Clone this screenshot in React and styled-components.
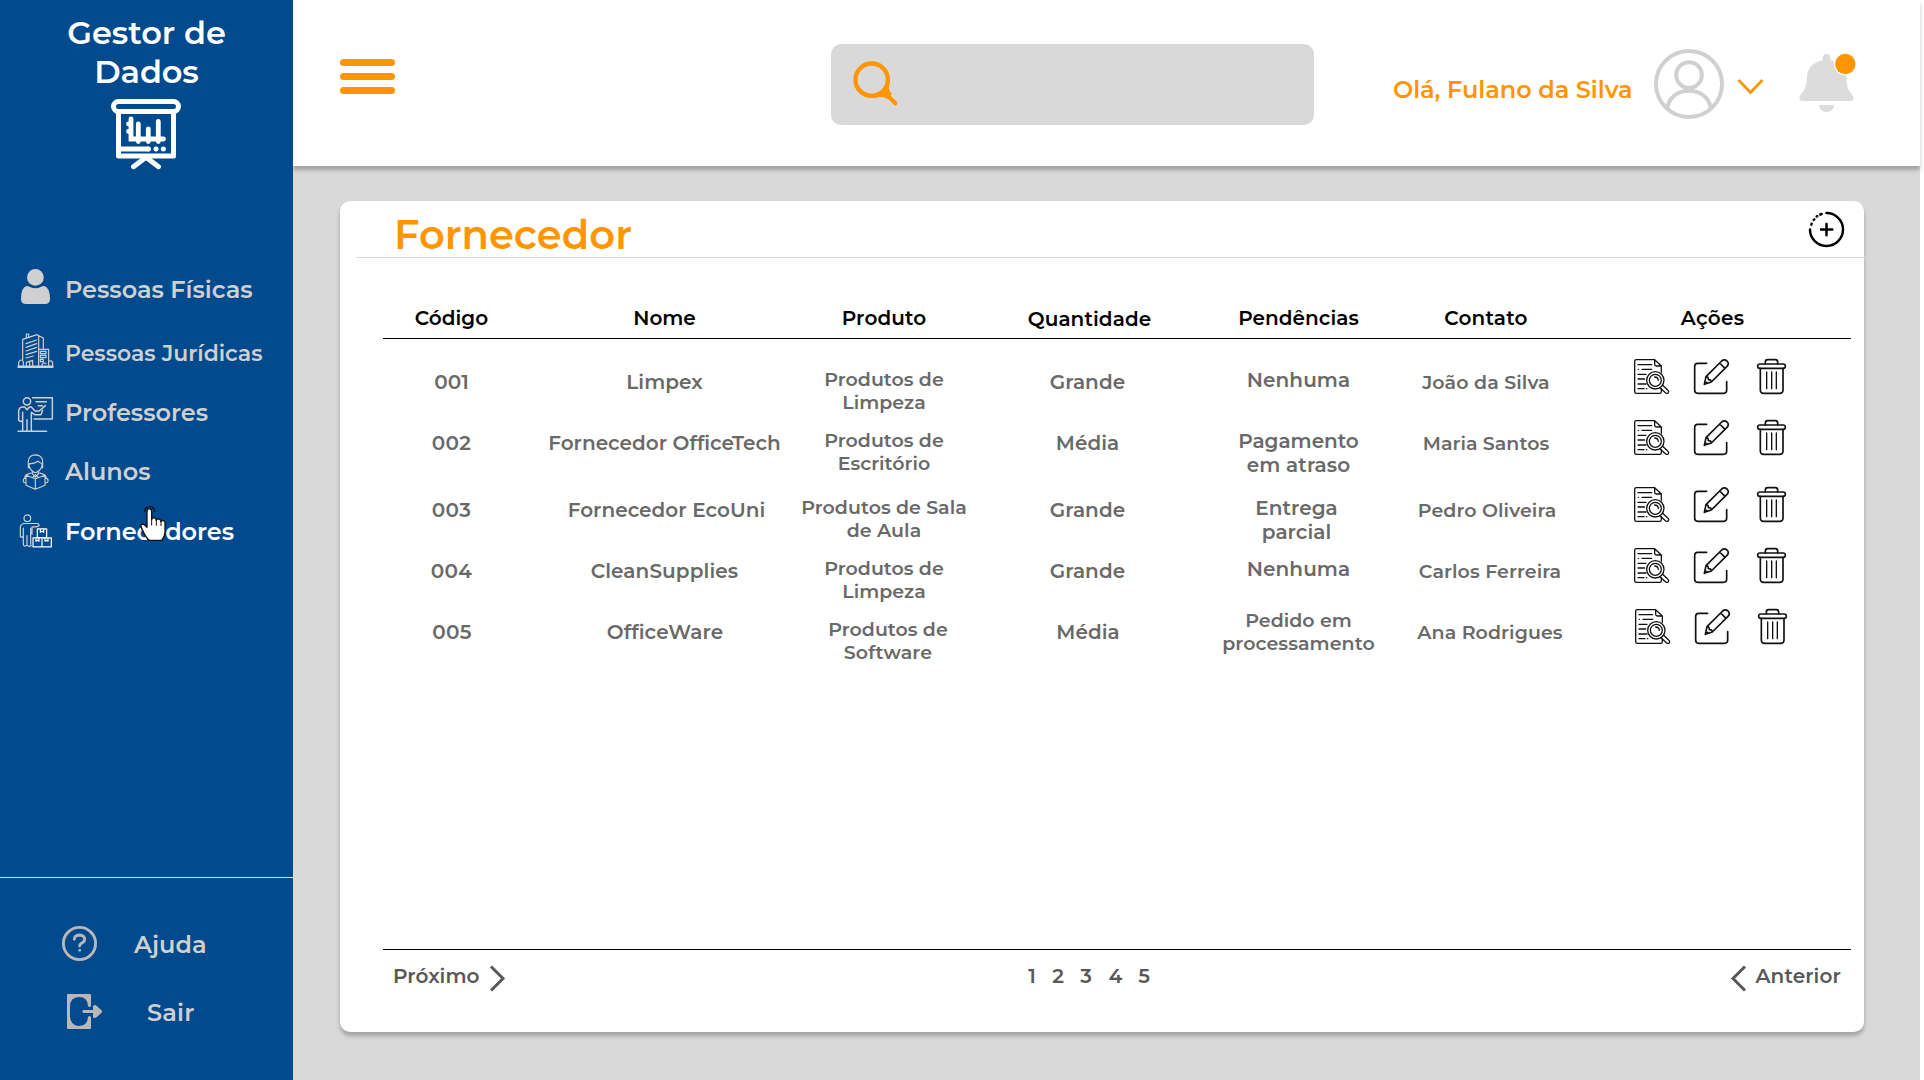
import React, { useLayoutEffect, useRef, useState } from "react";
import styled, { createGlobalStyle, css } from "styled-components";

const color = {
  blue: "#004a8d",
  orange: "#ff9500",
  grey: "#d9d9d9",
  nav: "#d0d0d0",
  text: "#696969",
  foot: "#585858",
};

const GlobalStyle = createGlobalStyle`
  * { box-sizing: border-box; }
  body {
    margin: 0;
    background: #fff;
    overflow: hidden;
    font-family: Montserrat, Inter, "Liberation Sans", sans-serif;
    font-weight: 600;
  }
  svg { display: block; flex: none; overflow: visible; }
`;

/* ---------- text tracked out to a given measure ---------- */

const Label = styled.span`
  display: block;
  width: max-content;
  white-space: nowrap;
  flex: none;
`;

function Fit({ w, children }) {
  const ref = useRef(null);
  const [spacing, setSpacing] = useState(0);
  useLayoutEffect(() => {
    const natural = ref.current.getBoundingClientRect().width;
    setSpacing((w + 1.5 - natural) / String(children).length);
  }, [w, children]);
  return (
    <Label ref={ref} style={{ letterSpacing: `${spacing}px` }}>
      {children}
    </Label>
  );
}

/* ---------- shell ---------- */

const Page = styled.div`
  display: flex;
  width: 1920px;
  height: 1080px;
  background: ${color.grey};
`;

const Sidebar = styled.aside`
  display: flex;
  flex-direction: column;
  flex: none;
  width: 293px;
  height: 1080px;
  background: ${color.blue};
`;

const Brand = styled.div`
  display: flex;
  flex-direction: column;
  align-items: center;
  height: 260px;
  padding-top: 13px;
  color: #fff;
  font-size: 32px;
  line-height: 39px;
  svg { margin: 8px 2px 0 0; }
`;

const Nav = styled.nav`
  display: flex;
  flex-direction: column;
  flex: 1;
`;

const NavItem = styled.a`
  position: relative;
  display: flex;
  align-items: center;
  gap: 12px;
  height: ${(p) => p.$h}px;
  padding: 0 0 ${(p) => (p.$size ? 0 : 2)}px 18px;
  font-size: ${(p) => p.$size || 24}px;
  color: ${(p) => (p.$active ? "#fff" : color.nav)};
  > svg:first-child { transform: translateY(${(p) => p.$shift}px); }
`;

const Pointer = styled.svg`
  position: absolute;
  left: 139px;
  top: 2px;
`;

const SideFoot = styled.div`
  height: 203px;
  padding-top: 33px;
  border-top: 1px solid ${color.grey};
  color: ${color.nav};
  font-size: 24px;
`;

const FootItem = styled.a`
  display: flex;
  align-items: center;
  height: 68px;
  padding: 0 0 2px ${(p) => p.$left}px;
  gap: ${(p) => p.$gap}px;
  svg { margin-top: -1px; }
`;

const Main = styled.main`
  display: flex;
  flex-direction: column;
  width: 1627px;
`;

const Header = styled.header`
  display: flex;
  align-items: flex-start;
  flex: none;
  height: 166px;
  padding-left: 47px;
  background: #fff;
  box-shadow: 0 4px 4px rgba(0, 0, 0, 0.25);
  clip-path: inset(0 -4px -10px 0);
`;

const Burger = styled.button`
  display: flex;
  flex-direction: column;
  gap: 7px;
  width: 55px;
  margin: 59px 436px 0 0;
  padding: 0;
  border: 0;
  background: none;
`;

const Bar = styled.span`
  height: 7px;
  border-radius: 3.5px;
  background: ${color.orange};
`;

const Search = styled.div`
  width: 483px;
  height: 81px;
  margin-top: 44px;
  padding: 17px 22px;
  border-radius: 10px;
  background: ${color.grey};
`;

const User = styled.div`
  display: flex;
  align-items: flex-start;
  margin-left: 79px;
  padding-top: 49px;
  color: ${color.orange};
  font-size: 24px;
  line-height: 81px;
`;

const Avatar = styled.svg`margin-left: 21.5px;`;
const Caret = styled.svg`margin: 29px 0 0 13px;`;
const Bell = styled.svg`margin: 5px 0 0 35px;`;

/* ---------- card ---------- */

const Card = styled.section`
  display: flex;
  flex-direction: column;
  width: 1524px;
  height: 831px;
  margin: 35px 0 0 47px;
  border-radius: 10px;
  background: #fff;
  box-shadow: 0 4px 4px rgba(0, 0, 0, 0.25);
`;

const CardHead = styled.div`
  display: flex;
  align-items: flex-start;
  justify-content: space-between;
  width: 1510px;
  height: 57px;
  margin-left: 16px;
  padding: 11px 22px 0 38px;
  border-bottom: 1px solid ${color.grey};
  color: ${color.orange};
  font-size: 40px;
  line-height: 45px;
`;

const Title = styled.h1`
  margin: 0;
  font: inherit;
`;

const Table = styled.div`
  width: 1468px;
  height: 651px;
  margin: 40px 0 0 43px;
`;

const grid = css`
  display: grid;
  grid-template-columns: 136px 291px 148px 260px 161px 212px 237px;
`;

const HeadRow = styled.div`
  ${grid}
  height: 41px;
  margin-bottom: 20px;
  border-bottom: 1px solid #000;
  color: #000;
  font-size: 20px;
  line-height: 40px;
`;

const Row = styled.div`
  ${grid}
  height: ${(p) => p.$h}px;
  color: ${color.text};
`;

const Cell = styled.div`
  display: flex;
  flex-direction: column;
  align-items: center;
  padding-top: ${(p) => p.$top || 0}px;
  transform: translateX(${(p) => p.$dx || 0}px);
  font-size: ${(p) => (p.$small ? 19 : 20)}px;
  line-height: ${(p) => (p.$small ? 23 : 24)}px;
`;

const HeadCell = styled.div`
  display: flex;
  justify-content: center;
  padding-top: ${(p) => p.$top || 0}px;
  transform: translateX(${(p) => p.$dx || 0}px);
`;

const Actions = styled.div`
  display: flex;
  align-items: flex-start;
  padding-left: ${(p) => 43 + (p.$dx || 0)}px;
  gap: 25px;
  color: #111;
`;

const Pager = styled.div`
  display: flex;
  align-items: flex-start;
  justify-content: space-between;
  width: 1468px;
  margin-left: 43px;
  padding: 14px 10px 0 10px;
  border-top: 1px solid #000;
  color: ${color.foot};
  font-size: 20px;
  line-height: 24px;
`;

const Step = styled.a`
  display: flex;
  gap: ${(p) => p.$gap}px;
  svg { margin-top: 1px; }
`;

const Pages = styled.div`
  display: flex;
  width: 140px;
  margin-right: 53px;
`;

const PageNo = styled.a`
  width: ${(p) => p.$w}px;
  text-align: center;
`;

/* ---------- icons ---------- */

const Glyph = ({ size = 35, sw = 4, children }) => (
  <svg width={size} height={size} viewBox="0 0 105 105" fill="none" stroke="currentColor"
    strokeWidth={sw} strokeLinecap="round" strokeLinejoin="round">
    {children}
  </svg>
);

const BoardLogo = () => (
  <svg width="70" height="70" viewBox="0 0 70 70" fill="none" stroke="#fff" strokeWidth="5" strokeLinecap="round">
    <rect x="2.5" y="2.5" width="65" height="10" rx="5" />
    <path d="M7.5 14V57H62.5V14" strokeLinejoin="round" />
    <path d="M34 59L22.5 67.7M36 59L47.5 67.7" />
    <path d="M10 50H38" strokeLinecap="butt" />
    <path d="M37 50h.5M45 50h.1M52.3 50h.1" />
    <path d="M20 20V40H52.5M17.5 25h1M17.5 32.5h1M27.3 25V42.5M37.3 30V42.5M47.3 22.5V42.5" strokeWidth="4.8" />
  </svg>
);

const PersonIcon = () => (
  <svg width="35" height="35" viewBox="0 0 35 35" fill="currentColor">
    <circle cx="17.4" cy="8.4" r="8.4" />
    <path d="M8.5 17Q10.5 17 12 18Q17.4 20.6 22.8 18Q24.3 17 26.3 17Q32 18.5 32 30Q32 35 27 35H8Q3 35 3 30Q3 18.5 8.5 17Z" />
  </svg>
);

const BuildingIcon = () => (
  <Glyph sw={3.6}>
    <path d="M0 99.5H105M0 103H105M14 80V19L57 5L76 15V46M62 10V99M25 14V3h7v9" />
    <path d="M24 32L56 21M24 43L56 32M24 54L56 43M24 65L56 55M24 75L46 69" />
    <path d="M62 49H92V99M67 55h17v7h-17zM67 67h17v7h-17zM67 79h9v7h-9z" />
    <path d="M25 99V88L44 82V99M35 86V99M2 99V88q6-13 14-2v13M92 86q9-7 12 4v9M72 99v-5q5-8 12-2" />
  </Glyph>
);

const TeacherIcon = () => (
  <Glyph sw={4.4}>
    <circle cx="27" cy="13" r="11" />
    <path d="M44 2H103V66H48M54 14H85M61 26H73" />
    <path d="M2 70V43Q2 31 14 30H20L27 38L34 30H40L51 42H64L82 26" />
    <path d="M40 46L50 53H69L74 40M14 46V102M27 68V102M40 47V102M2 70Q8 77 14 70M0 103H86" />
  </Glyph>
);

const StudentIcon = () => (
  <Glyph sw={3.4}>
    <path d="M31 40V20Q33 1 52 1Q73 2 74 20V40M34 28Q50 27 60 20Q66 26 72 27M34 28Q31 36 37 43Q46 54 52 54Q59 54 68 43Q74 36 72 27" />
    <path d="M43 51V57L52 68L62 57V51M52 60L45 68M52 60L60 68M39 56Q24 59 20 68M66 56Q80 59 85 68" />
    <path d="M52 104L24 92V62L52 73L81 62V92ZM52 73V104M24 70Q14 72 16 80Q18 87 24 84M81 70Q92 72 90 80Q87 87 81 84" />
  </Glyph>
);

const SupplierIcon = () => (
  <Glyph sw={3.6}>
    <g stroke={color.nav}>
      <circle cx="28" cy="14" r="10" />
      <path d="M7 69V42Q8 30 19 30H57Q64 31 63 37Q61 40 42 40V62M7 69Q12 74 16 67V44M16 67V94Q20 101 27 95V66M27 95Q33 101 40 96M38 44V92" />
    </g>
    <path d="M58 46H86V72H58ZM45 73H72V100H45ZM72 73H100V100H72ZM67 47V56L72 53L77 56V47M54 74V83L59 80L63 83V74M81 74V83L86 80L90 83V74" />
  </Glyph>
);

const HandPointer = () => (
  <Pointer width="28" height="36" viewBox="0 0 84 108" stroke="#111" strokeWidth="4" strokeLinecap="round" strokeLinejoin="round">
    <path d="M17 17Q17 2 32 2Q46 2 47 17" fill="none" stroke="#0b1626" />
    <path d="M24 59V15Q25 8 31 8Q38 9 38 17V40Q39 35 45 35Q51 36 52 43Q54 38 60 39Q66 41 66 47Q68 42 74 44Q79 46 78 52V78Q78 92 68 103H31Q22 96 13 77Q5 64 6 57Q12 50 24 64Z" fill="#fff" />
    <path d="M38 40V57M52 43V58M66 47V59" fill="none" strokeWidth="3" />
  </Pointer>
);

const HelpIcon = () => (
  <Glyph sw={8.6}>
    <g stroke="#b8b8b8">
      <circle cx="52.5" cy="52.5" r="48.3" />
      <path d="M37 40Q37 28 52 27Q68 28 68 40Q68 47 60 51Q53 54 53 60M53 73h.1" />
    </g>
  </Glyph>
);

const ExitIcon = () => (
  <svg width="35" height="35" viewBox="0 0 105 105" fill="#b8b8b8">
    <path fillRule="evenodd" d="M3 0H69Q72 0 72 3V36Q68 42 63 36Q62 9 36 9Q9 10 9 38V67Q10 95 36 96Q62 95 63 69Q68 63 72 69V102Q72 105 69 105H3Q0 105 0 102V3Q0 0 3 0Z" />
    <path d="M49 48H78V36Q81 31 87 34L105 50V55L87 71Q81 74 78 69V57H49Q43 52 49 48Z" />
  </svg>
);

const SearchIcon = () => (
  <svg width="45" height="45" viewBox="0 0 135 135" fill="none" stroke={color.orange} strokeWidth="13" strokeLinecap="round">
    <circle cx="56" cy="56" r="48.5" />
    <path d="M106 106L127 127" />
    <path d="M111 60Q102 86 117 99L101 114Q93 104 62 111L88 96L99 82Z" fill={color.orange} stroke="none" />
  </svg>
);

const AddIcon = () => (
  <Glyph sw={7.4}>
    <g stroke="#000">
      <path d="M52.5 3A49.5 49.5 0 1 1 3 52.5" />
      <path d="M7 38L8 35M14 24L16 22M23 13.5L25 12M34 7.5L38 6" />
      <path d="M52.5 36V70M36 52.5H70" />
    </g>
  </Glyph>
);

const ViewIcon = () => (
  <Glyph sw={3.9}>
    <path d="M82 40V21L62 2H7Q2 2 2 7V98Q2 103 7 103H77Q82 103 82 98V90M62 2V16Q62 21 67 21H82" />
    <path d="M12 17H53M13 31h.5M24 31H53M12 46H36M12 60H32M12 75H36M12 89H30M37 89h1.5" />
    <circle cx="64" cy="64" r="26" />
    <circle cx="64" cy="64" r="18" />
    <path d="M62 54Q72 54 73 64M78 86L95 102Q101 105 103 101Q106 97 101 93L86 79" />
  </Glyph>
);

const EditIcon = () => (
  <Glyph sw={5}>
    <path d="M38 13H11Q2 13 2 22V94Q2 103 11 103H89Q98 103 98 94V68" />
    <path d="M31 76L36 53L83 6Q91-1 99 6Q107 14 99 22L52 69ZM77 12L93 28M36 53Q44 53 43 62Q52 61 52 69M31 76L38 70" />
  </Glyph>
);

const TrashIcon = () => (
  <Glyph sw={5}>
    <rect x="11" y="15" width="83" height="13" rx="6.5" />
    <path d="M34 15V9Q34 2 41 2H64Q71 2 71 9V15M19 28V93Q19 103 29 103H77Q87 103 87 93V28" />
    <path d="M38 39V89M53 39V89M67 39V89" strokeWidth="4" />
  </Glyph>
);

const Chevron = ({ d }) => (
  <svg width="16" height="27" viewBox="0 0 16 27" fill="none" stroke={color.foot} strokeWidth="3">
    <path d={d} />
  </svg>
);

/* ---------- data ---------- */

const nav = [
  { text: "Pessoas Físicas", w: 186, h: 60, shift: -3, Icon: PersonIcon },
  { text: "Pessoas Jurídicas", w: 196, h: 66, shift: -3, size: 22, Icon: BuildingIcon },
  { text: "Professores", w: 141.5, h: 54, shift: 2, Icon: TeacherIcon },
  { text: "Alunos", w: 84, h: 64, shift: 0.5, Icon: StudentIcon },
  { text: "Fornecedores", w: 167.5, h: 56, shift: -0.5, Icon: SupplierIcon, active: true },
];

const columns = [
  ["Código", 72, 0.5],
  ["Nome", 61],
  ["Produto", 83],
  ["Quantidade", 122, 1.5, 1],
  ["Pendências", 119],
  ["Contato", 82, 1],
  ["Ações", 62, 3],
];

const rows = [
  {
    h: 61, code: ["001", 33], name: ["Limpex", 75],
    product: [["Produtos de", 118], ["Limpeza", 82]],
    amount: ["Grande", 74], pending: [["Nenhuma", 102]], contact: ["João da Silva", 126],
  },
  {
    h: 67, code: ["002", 38], name: ["Fornecedor OfficeTech", 231],
    product: [["Produtos de", 118], ["Escritório", 91]],
    amount: ["Média", 62], pending: [["Pagamento", 119], ["em atraso", 102]], contact: ["Maria Santos", 125],
  },
  {
    h: 61, code: ["003", 38], name: ["Fornecedor EcoUni", 196], nameDx: 2,
    product: [["Produtos de Sala", 164], ["de Aula", 73]],
    amount: ["Grande", 74], pending: [["Entrega", 81], ["parcial", 68]], pendDx: -2, contact: ["Pedro Oliveira", 137], contactDx: 2,
  },
  {
    h: 61, code: ["004", 40], name: ["CleanSupplies", 146],
    product: [["Produtos de", 118], ["Limpeza", 82]],
    amount: ["Grande", 74], pending: [["Nenhuma", 102]], contact: ["Carlos Ferreira", 141], contactDx: 5,
  },
  {
    h: 61, dx: 1, code: ["005", 38], name: ["OfficeWare", 115], nameDx: 0.5,
    product: [["Produtos de", 118], ["Software", 87]], productDx: 4,
    amount: ["Média", 62], pending: [["Pedido em", 105], ["processamento", 151]], pendSmall: true,
    contact: ["Ana Rodrigues", 144], contactDx: 5,
  },
];

const one = ([text, w]) => <Fit key={text} w={w}>{text}</Fit>;

export default function App() {
  return (
    <>
      <GlobalStyle />
      <Page>
        <Sidebar>
          <Brand>
            <Fit w={157}>Gestor de</Fit>
            <Fit w={103}>Dados</Fit>
            <BoardLogo />
          </Brand>
          <Nav>
            {nav.map(({ text, w, h, shift, size, Icon, active }) => (
              <NavItem key={text} $h={h} $shift={shift} $size={size} $active={active}>
                <Icon />
                <Fit w={w}>{text}</Fit>
                {active && <HandPointer />}
              </NavItem>
            ))}
          </Nav>
          <SideFoot>
            <FootItem $left={62} $gap={37}>
              <HelpIcon />
              <Fit w={71}>Ajuda</Fit>
            </FootItem>
            <FootItem $left={67} $gap={45}>
              <ExitIcon />
              <Fit w={46}>Sair</Fit>
            </FootItem>
          </SideFoot>
        </Sidebar>
        <Main>
          <Header>
            <Burger aria-label="Menu">
              <Bar />
              <Bar />
              <Bar />
            </Burger>
            <Search>
              <SearchIcon />
            </Search>
            <User>
              <Fit w={238}>Olá, Fulano da Silva</Fit>
              <Avatar width="70" height="70" viewBox="0 0 70 70" fill="none" stroke="#d0d0d0" strokeWidth="4">
                <circle cx="35" cy="35" r="33" />
                <circle cx="35" cy="26" r="12.8" />
                <path d="M13 60C16 35.5 54 35.5 57 60" />
              </Avatar>
              <Caret width="27" height="17" viewBox="0 0 27 17" fill="none" stroke={color.orange} strokeWidth="2.8">
                <path d="M1.5 2L13.5 14.5L25.5 2" />
              </Caret>
              <Bell width="57" height="58" viewBox="0 0 57 58" fill="#dcdcdc">
                <path d="M23.5 4.5A4 4.5 0 0 1 31.5 4.5V6.5Q47 9 47.5 24Q47 35 53 40Q57 47 51.5 47H3.5Q-2 47 2 40Q8 35 8 23Q9 9 23.5 6.5Z" />
                <path d="M20 51H35Q34.5 58 27.5 58Q20.5 58 20 51Z" />
                <circle cx="46.3" cy="10" r="11.3" fill="#fff" />
                <circle cx="46.3" cy="10" r="10.2" fill={color.orange} />
              </Bell>
            </User>
          </Header>
          <Card>
            <CardHead>
              <Title>
                <Fit w={236.5}>Fornecedor</Fit>
              </Title>
              <AddIcon />
            </CardHead>
            <Table>
              <HeadRow>
                {columns.map(([text, w, dx, top]) => (
                  <HeadCell key={text} $dx={dx} $top={top}>
                    <Fit w={w}>{text}</Fit>
                  </HeadCell>
                ))}
              </HeadRow>
              {rows.map((r) => (
                <Row key={r.code[0]} $h={r.h}>
                  <Cell $top={11} $dx={r.dx || 0.5}>{one(r.code)}</Cell>
                  <Cell $top={11} $dx={r.nameDx}>{one(r.name)}</Cell>
                  <Cell $top={9} $small $dx={r.productDx}>{r.product.map(one)}</Cell>
                  <Cell $top={11} $dx={r.dx ? 0 : -0.5}>{one(r.amount)}</Cell>
                  <Cell $top={r.pendSmall ? 0 : 9} $small={r.pendSmall} $dx={r.pendDx}>{r.pending.map(one)}</Cell>
                  <Cell $top={12} $small $dx={r.contactDx || 1}>{one(r.contact)}</Cell>
                  <Actions $dx={r.dx}>
                    <ViewIcon />
                    <EditIcon />
                    <TrashIcon />
                  </Actions>
                </Row>
              ))}
            </Table>
            <Pager>
              <Step $gap={9}>
                <Fit w={85}>Próximo</Fit>
                <Chevron d="M2 1.5L14 13.5L2 25.5" />
              </Step>
              <Pages>
                <PageNo $w={22}>1</PageNo>
                <PageNo $w={30}>2</PageNo>
                <PageNo $w={26}>3</PageNo>
                <PageNo $w={33}>4</PageNo>
                <PageNo $w={24}>5</PageNo>
              </Pages>
              <Step $gap={9}>
                <Chevron d="M14 1.5L2 13.5L14 25.5" />
                <Fit w={84}>Anterior</Fit>
              </Step>
            </Pager>
          </Card>
        </Main>
      </Page>
    </>
  );
}
